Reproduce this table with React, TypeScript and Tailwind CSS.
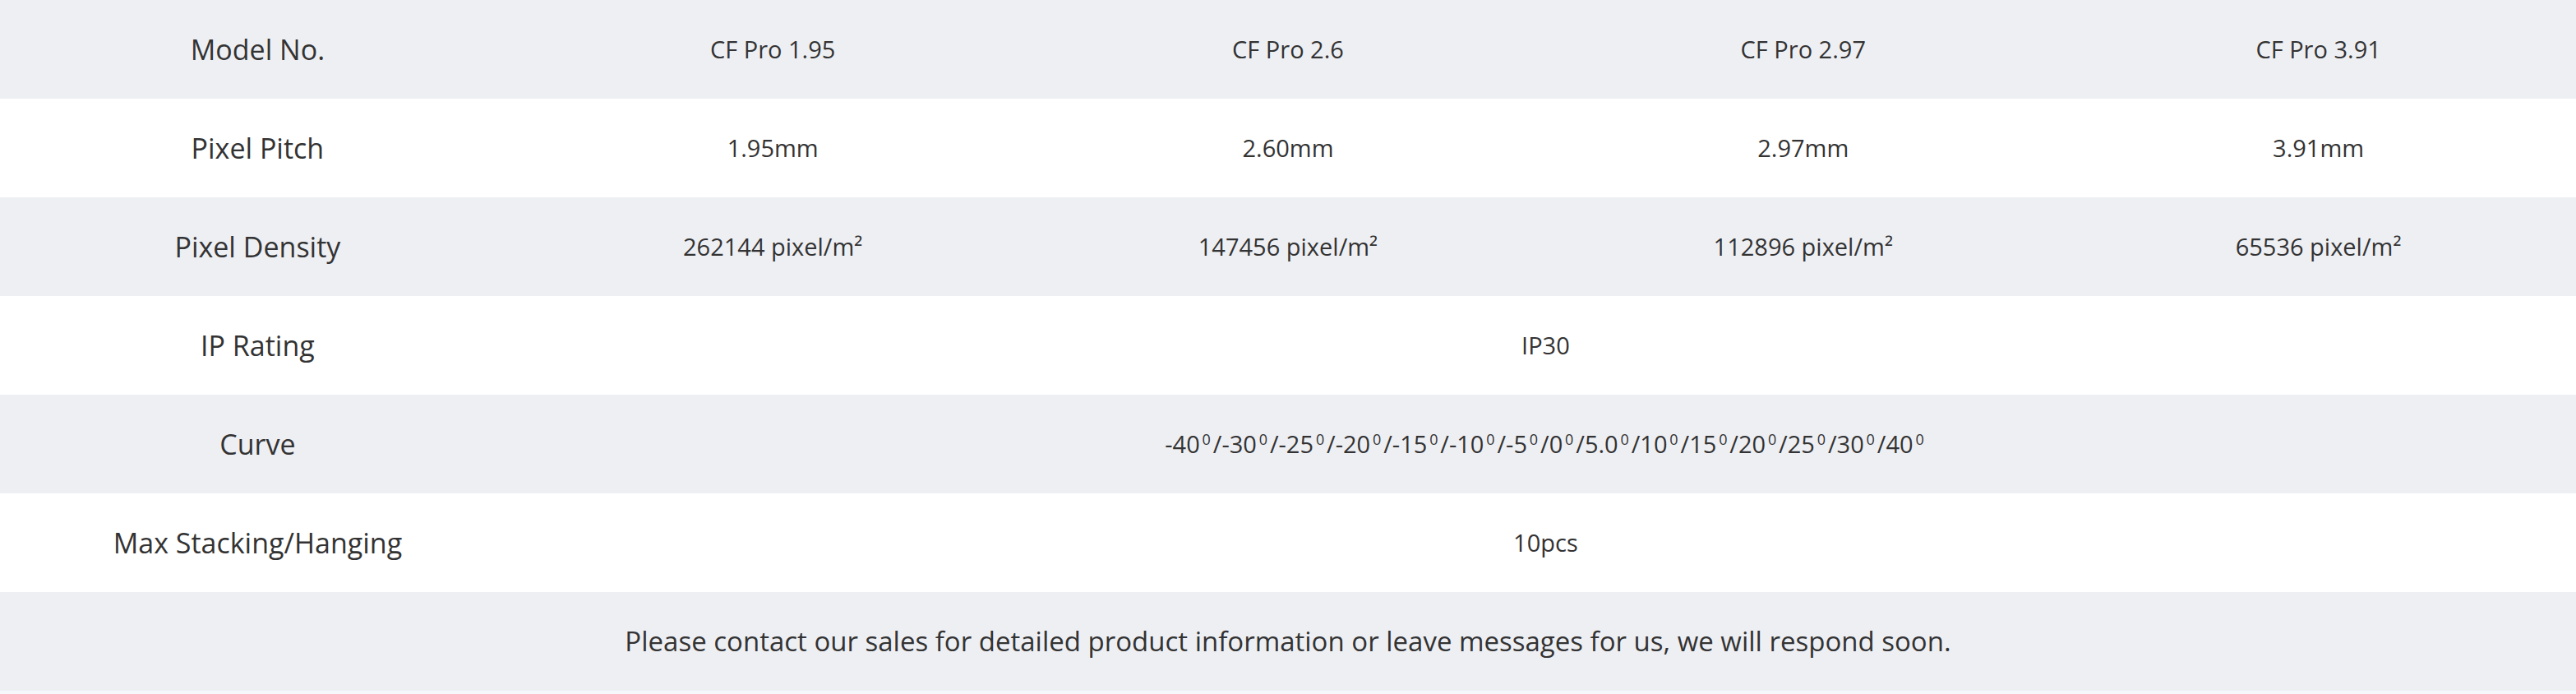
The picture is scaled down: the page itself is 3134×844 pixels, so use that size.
const models = ['CF Pro 1.95', 'CF Pro 2.6', 'CF Pro 2.97', 'CF Pro 3.91'];

const curve = ['-40', '-30', '-25', '-20', '-15', '-10', '-5', '0', '5.0', '10', '15', '20', '25', '30', '40'];

type Row = { label: string; cells?: string[]; span?: React.ReactNode };

function CurveValues() {
  return (
    <>
      {curve.map((v, i) => (
        <span key={v}>
          {v}
          <span className="inline-block w-[16px] text-center text-[18px] leading-none align-[0.55em]">0</span>
          {i < curve.length - 1 && '/'}
        </span>
      ))}
    </>
  );
}

const rows: Row[] = [
  { label: 'Model No.', cells: models },
  { label: 'Pixel Pitch', cells: ['1.95mm', '2.60mm', '2.97mm', '3.91mm'] },
  {
    label: 'Pixel Density',
    cells: ['262144 pixel/m²', '147456 pixel/m²', '112896 pixel/m²', '65536 pixel/m²'],
  },
  { label: 'IP Rating', span: 'IP30' },
  { label: 'Curve', span: <CurveValues /> },
  { label: 'Max Stacking/Hanging', span: '10pcs' },
];

export default function App() {
  return (
    <div
      className="min-h-screen bg-[#f6f7fb] text-[#333333]"
      style={{ fontFamily: '"Open Sans", "Noto Sans", sans-serif' }}
    >
      <table className="w-full table-fixed border-collapse">
        <tbody>
          {rows.map((row, i) => (
            <tr key={row.label} className={`h-[120px] ${i % 2 === 0 ? 'bg-[#eeeff3]' : 'bg-white'}`}>
              <td className="text-center text-[34px] p-0">{row.label}</td>
              {row.cells ? (
                row.cells.map((c) => (
                  <td key={c} className="text-center text-[29px] p-0">
                    {c}
                  </td>
                ))
              ) : (
                <td colSpan={4} className="text-center text-[29px] p-0">
                  {row.span}
                </td>
              )}
            </tr>
          ))}
          <tr className="h-[120px] bg-[#eeeff3]">
            <td colSpan={5} className="text-center text-[33px] p-0">
              Please contact our sales for detailed product information or leave messages for us, we will respond soon.
            </td>
          </tr>
        </tbody>
      </table>
    </div>
  );
}
